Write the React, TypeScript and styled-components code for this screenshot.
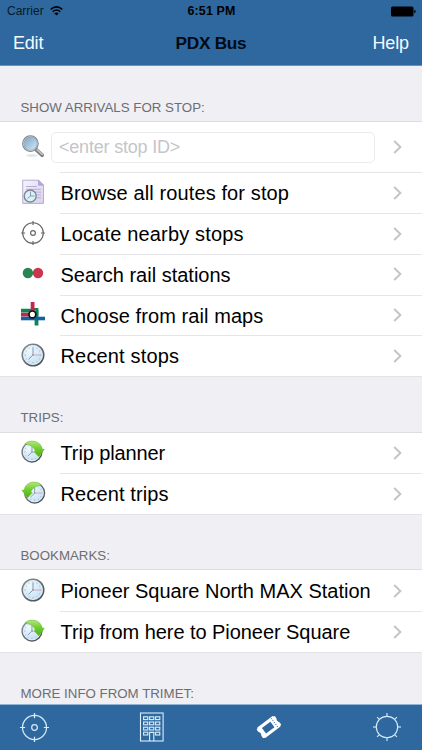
import React from "react";
import styled, { createGlobalStyle } from "styled-components";

const Global = createGlobalStyle`
  * { box-sizing: border-box; }
  html, body { margin: 0; padding: 0; }
  body { font-family: "Liberation Sans", Arial, sans-serif; background: #efeff4; overflow: hidden; }
  svg { display: block; flex: none; }
`;

const Screen = styled.div`
  width: 422px;
  height: 750px;
  display: flex;
  flex-direction: column;
  overflow: hidden;
  background: #efeff4;
`;

const Header = styled.header`
  flex: none;
  height: 66px;
  background: #2e689f;
  border-bottom: 1px solid #6b93ba;
`;

const StatusBar = styled.div`
  display: grid;
  grid-template-columns: 1fr auto 1fr;
  align-items: center;
  height: 22px;
  padding: 0 6px 0 7px;
  font-size: 12px;
  color: #000;
`;

const Carrier = styled.div`
  display: flex;
  align-items: center;
  gap: 6px;
  color: #07182a;
`;

const Clock = styled.div`
  font-weight: bold;
  font-size: 12.4px;
  letter-spacing: 0.2px;
`;

const BatteryBox = styled.div`
  display: flex;
  justify-content: flex-end;
`;

const NavBar = styled.nav`
  display: grid;
  grid-template-columns: 1fr auto 1fr;
  align-items: center;
  height: 43px;
  padding: 0 13px 2px;
`;

const NavButton = styled.div<{ $end?: boolean; $spacing: number }>`
  font-size: 18px;
  line-height: 22px;
  color: #f4fbff;
  text-align: ${(p) => (p.$end ? "right" : "left")};
  letter-spacing: ${(p) => p.$spacing}px;
`;

const Title = styled.h1`
  margin: 0;
  font-size: 17.2px;
  line-height: 22px;
  font-weight: bold;
  letter-spacing: -0.25px;
  color: #020a14;
`;

const Content = styled.main`
  flex: 1;
  min-height: 0;
  overflow: hidden;
`;

const SectionTitle = styled.h2`
  margin: 0;
  height: 56.4px;
  padding: 34px 0 0 20.5px;
  font-size: 13.3px;
  line-height: 16px;
  font-weight: normal;
  color: #6d6d72;
  white-space: nowrap;
`;

const List = styled.div`
  background: #fff;
  box-shadow: 0 -1px 0 #dcdce1, 0 1px 0 #e2e2e7;
`;

const Row = styled.div<{ $height: number }>`
  display: flex;
  align-items: center;
  height: ${(p) => p.$height}px;
  padding-left: 20px;
`;

const IconCell = styled.div`
  width: 26px;
  height: 26px;
  flex: none;
  margin: 0 14px 1.6px 0;
`;

const RowBody = styled.div<{ $divided: boolean }>`
  flex: 1;
  align-self: stretch;
  display: flex;
  align-items: center;
  justify-content: space-between;
  padding: 0 20px 1px 0;
  border-top: 1px solid ${(p) => (p.$divided ? "#e6e6e9" : "transparent")};
`;

const Label = styled.span<{ $spacing: number }>`
  font-size: 20px;
  line-height: 24px;
  padding-left: 0.5px;
  padding-top: 1px;
  color: #000;
  white-space: nowrap;
  letter-spacing: ${(p) => p.$spacing}px;
`;

const StopField = styled.div`
  width: 324px;
  height: 31px;
  margin-left: -9px;
  padding-left: 7px;
  border: 1px solid #ebebed;
  border-radius: 5px;
  display: flex;
  align-items: center;
  font-size: 18px;
  letter-spacing: -0.2px;
  color: #c5c5ca;
`;

const Toolbar = styled.footer`
  flex: none;
  height: 46px;
  display: flex;
  align-items: center;
  justify-content: space-between;
  padding: 0 20px 1px 20px;
  background: #2e689f;
  border-top: 1px solid #8fb4d4;
`;

const Chevron = () => (
  <svg width="9" height="14" viewBox="0 0 9 14">
    <path d="M1.2 1 7.4 7 1.2 13" fill="none" stroke="#c3c3c8" strokeWidth="1.9" />
  </svg>
);

const Defs = () => (
  <defs>
    <radialGradient id="glass" cx=".35" cy=".3" r=".8">
      <stop offset="0" stopColor="#eef8fe" />
      <stop offset="1" stopColor="#c0def2" />
    </radialGradient>
    <linearGradient id="rim" x1="0" y1="0" x2="1" y2="1">
      <stop offset="0" stopColor="#8a9299" />
      <stop offset="1" stopColor="#42484e" />
    </linearGradient>
    <linearGradient id="green" x1="0" y1="0" x2="0" y2="1">
      <stop offset="0" stopColor="#b4e77b" />
      <stop offset=".5" stopColor="#6fcc2b" />
      <stop offset="1" stopColor="#4fb012" />
    </linearGradient>
    <linearGradient id="lens" x1="0" y1="0" x2="1" y2="1">
      <stop offset="0" stopColor="#7e9fbd" />
      <stop offset=".5" stopColor="#a6c6df" />
      <stop offset="1" stopColor="#dbeef9" />
    </linearGradient>
    <linearGradient id="paper" x1="0" y1="0" x2="1" y2="1">
      <stop offset="0" stopColor="#f6f3fc" />
      <stop offset="1" stopColor="#d8d1ee" />
    </linearGradient>
  </defs>
);

const ClockFace = () => (
  <g>
    <circle cx="13" cy="13" r="10.7" fill="url(#glass)" stroke="url(#rim)" strokeWidth="1.6" />
    <circle cx="13" cy="13" r="9.4" fill="none" stroke="#e9f0f5" strokeWidth=".8" />
    <path
      d="M13 4.6v1.2M13 20.2v1.2M4.6 13h1.2M20.2 13h1.2M8.8 5.8l.4.8M16.8 19.4l.4.8M5.8 8.8l.8.4M19.4 16.8l.8.4M17.2 5.8l-.4.8M9.2 19.4l-.4.8M20.2 8.8l-.8.4M6.6 16.8l-.8.4"
      stroke="#8fa8ba"
      strokeWidth=".9"
    />
    <path d="M13 6v7l-4.5 4.3" fill="none" stroke="#7f99ae" strokeWidth="1" />
    <path d="M13 13h7.5" stroke="#d3939c" strokeWidth=".8" />
    <circle cx="13" cy="13" r="1" fill="#9aa3b2" />
  </g>
);

const GreenArrow = () => (
  <path
    d="M4.8 5C8 1.2 17.6.4 21.2 7L22.2 10 24.4 10.3 18.9 17.8 14 12.8 15.4 12.4C14.6 8.4 9.8 5.3 4.8 5Z"
    fill="url(#green)"
    stroke="#67ba34"
    strokeWidth=".5"
  />
);

const Crosshair = ({ color, size, width }: { color: string; size: number; width: number }) => (
  <svg width={size} height={size} viewBox="0 0 28 28">
    <g fill="none" stroke={color} strokeWidth={width}>
      <circle cx="14" cy="14" r="11.6" />
      <circle cx="14" cy="14" r="2.7" />
      <path d="M14 0v5M14 23v5M0 14h5M23 14h5" />
    </g>
  </svg>
);

type IconName = "search" | "document" | "target" | "dots" | "map" | "clock" | "forward" | "back";

const RowIcon = ({ name }: { name: IconName }) => {
  if (name === "target") {
    return (
      <svg width="26" height="26" viewBox="0 0 26 26">
        <g fill="none" stroke="#666668" strokeWidth="1.15">
          <circle cx="13" cy="13" r="10.3" />
          <circle cx="13" cy="13" r="2.4" />
          <path d="M13 1.1v4M13 20.9v4M1.1 13h4M20.9 13h4" />
        </g>
      </svg>
    );
  }
  return (
    <svg width="26" height="26" viewBox="0 0 26 26">
      <Defs />
      {name === "search" && (
        <g>
          <ellipse cx="12" cy="21.5" rx="6" ry="1.4" fill="#d8d8d8" opacity=".65" />
          <path d="m16.4 15.9 5.7 5.3" stroke="#7a7c7f" strokeWidth="3.8" strokeLinecap="round" />
          <path d="m17.2 15.9 5 4.5" stroke="#c2c3c5" strokeWidth="1.7" strokeLinecap="round" />
          <circle cx="10.4" cy="9.6" r="7.4" fill="url(#lens)" stroke="#78848e" strokeWidth="1.9" />
          <circle cx="10.4" cy="9.6" r="7" fill="none" stroke="#c9d4dc" strokeWidth=".8" />
        </g>
      )}
      {name === "document" && (
        <g>
          <path d="M2.7 1.2h15.8l5 5v18.2H2.7z" fill="url(#paper)" stroke="#afa5cf" strokeWidth=".9" />
          <path d="M18.5 1.2v5h5z" fill="#b7abd9" stroke="#9c90c2" strokeWidth=".6" />
          <path d="M6 7.5h11M6 10.3h15M14 13.1h7M16 15.9h5M17 18.7h4" stroke="#b8add8" strokeWidth="1" />
          <circle cx="10.2" cy="17" r="6" fill="#dcf0fa" stroke="#7d888f" strokeWidth="1.4" />
          <path d="M10.5 12.5V17l-3 2.5M10.5 17h4" fill="none" stroke="#7692a9" strokeWidth=".9" />
        </g>
      )}
      {name === "dots" && (
        <g>
          <path d="M7 13h12" stroke="#704b48" strokeWidth="2" />
          <circle cx="7.9" cy="13" r="5.2" fill="#2b8552" />
          <circle cx="18" cy="13" r="5.2" fill="#cb364c" />
        </g>
      )}
      {name === "map" && (
        <g>
          <path d="M1 9.6h11M16.5 9.6v14.9" stroke="#098657" strokeWidth="3.8" fill="none" />
          <path d="M12 8.2h5.2v6" stroke="#098657" strokeWidth="2.4" fill="none" />
          <path d="M12.6 1v12.6H1" stroke="#cb234e" strokeWidth="3.8" fill="none" />
          <path d="M1 17.5h24" stroke="#1361a5" strokeWidth="3.6" />
          <circle cx="12.4" cy="13.4" r="3.4" fill="#fff" stroke="#111" strokeWidth="1.7" />
        </g>
      )}
      {name === "clock" && <ClockFace />}
      {name === "forward" && (
        <g>
          <g transform="translate(0 1.1) scale(.92)"><ClockFace /></g>
          <GreenArrow />
        </g>
      )}
      {name === "back" && (
        <g>
          <g transform="translate(2.7 1.1) scale(.92)"><ClockFace /></g>
          <g transform="translate(26.3 0) scale(-1 1)"><GreenArrow /></g>
        </g>
      )}
    </svg>
  );
};

type Item = { icon: IconName; label: string; spacing?: number; field?: boolean };
type Section = { title: string; items: Item[] };

const sections: Section[] = [
  {
    title: "SHOW ARRIVALS FOR STOP:",
    items: [
      { icon: "search", label: "<enter stop ID>", field: true },
      { icon: "document", label: "Browse all routes for stop", spacing: 0.11 },
      { icon: "target", label: "Locate nearby stops", spacing: 0.16 },
      { icon: "dots", label: "Search rail stations", spacing: 0 },
      { icon: "map", label: "Choose from rail maps", spacing: 0.08 },
      { icon: "clock", label: "Recent stops", spacing: 0.16 },
    ],
  },
  {
    title: "TRIPS:",
    items: [
      { icon: "forward", label: "Trip planner", spacing: -0.12 },
      { icon: "back", label: "Recent trips", spacing: 0.12 },
    ],
  },
  {
    title: "BOOKMARKS:",
    items: [
      { icon: "clock", label: "Pioneer Square North MAX Station", spacing: 0 },
      { icon: "forward", label: "Trip from here to Pioneer Square", spacing: -0.06 },
    ],
  },
  { title: "MORE INFO FROM TRIMET:", items: [] },
];

const Wifi = () => (
  <svg width="13" height="10" viewBox="0 0 13 10">
    <g fill="none" stroke="#000" strokeWidth="1.5">
      <path d="M.7 3.4Q6.5-1.6 12.3 3.4" />
      <path d="M2.7 5.7Q6.5 2.4 10.3 5.7" />
    </g>
    <path d="M4.2 7.3Q6.5 5.5 8.8 7.3L6.5 9.6Z" />
  </svg>
);

const Battery = () => (
  <svg width="25" height="11" viewBox="0 0 25 11">
    <rect x="0" y=".5" width="22.5" height="10" rx="1.6" />
    <path d="M23.3 3.7q1.4.3 1.4 1.8t-1.4 1.8z" />
  </svg>
);

const Building = () => (
  <svg width="26" height="30" viewBox="0 0 26 30">
    <g fill="none" stroke="#d9effc" strokeWidth="1.1">
      <rect x="1.5" y="1" width="22.6" height="28" />
      {[4.8, 10, 15.2, 20.2].map((y) =>
        [4.6, 10.6, 16.6].map((x) =>
          y > 20 && x === 10.6 ? null : <rect key={`${x}-${y}`} x={x} y={y} width="4.2" height="2.8" />,
        ),
      )}
      <path d="M10.6 29v-8.6h4.2V29" />
    </g>
  </svg>
);

const Ticket = () => (
  <svg width="26" height="24" viewBox="0 0 26 24">
    <g transform="translate(13 12) rotate(-37)">
      <path
        fillRule="evenodd"
        fill="#fff"
        d="M-11.4-5.4q1.4 0 1.8-1.2H9.4q.4 1.2 1.8 1.2v3q-2 2.4 0 4.8v3q-1.4 0-1.8 1.2H-9.6q-.4-1.2-1.8-1.2v-3q2-2.4 0-4.8zM-6.3-3.4v6.8H4.3v-6.8z"
      />
      <path d="M7-5.6v11.2" stroke="#2e689f" strokeWidth=".9" strokeDasharray="1.2 1.2" />
    </g>
  </svg>
);

const Sun = () => (
  <svg width="30" height="30" viewBox="0 0 30 30">
    <g fill="none" stroke="#d6ecf9" strokeWidth="1.15">
      <circle cx="15" cy="15" r="10.7" />
      {[0, 45, 90, 135, 180, 225, 270, 315].map((a) => (
        <path key={a} d="M15 4.3V1" transform={`rotate(${a} 15 15)`} />
      ))}
    </g>
  </svg>
);

export default function App() {
  return (
    <Screen>
      <Global />
      <Header>
        <StatusBar>
          <Carrier>Carrier <Wifi /></Carrier>
          <Clock>6:51 PM</Clock>
          <BatteryBox><Battery /></BatteryBox>
        </StatusBar>
        <NavBar>
          <NavButton $spacing={-0.2}>Edit</NavButton>
          <Title>PDX Bus</Title>
          <NavButton $end $spacing={-0.1}>Help</NavButton>
        </NavBar>
      </Header>
      <Content>
        {sections.map((section) => (
          <section key={section.title}>
            <SectionTitle>{section.title}</SectionTitle>
            {section.items.length > 0 && (
              <List>
                {section.items.map((item, i) => (
                  <Row key={item.label} $height={item.field ? 50 : 40.75}>
                    <IconCell><RowIcon name={item.icon} /></IconCell>
                    <RowBody $divided={i > 0}>
                      {item.field ? (
                        <StopField>{item.label}</StopField>
                      ) : (
                        <Label $spacing={item.spacing ?? 0}>{item.label}</Label>
                      )}
                      <Chevron />
                    </RowBody>
                  </Row>
                ))}
              </List>
            )}
          </section>
        ))}
      </Content>
      <Toolbar>
        <Crosshair color="#d6ecf9" size={29} width={1.2} />
        <Building />
        <Ticket />
        <Sun />
      </Toolbar>
    </Screen>
  );
}
